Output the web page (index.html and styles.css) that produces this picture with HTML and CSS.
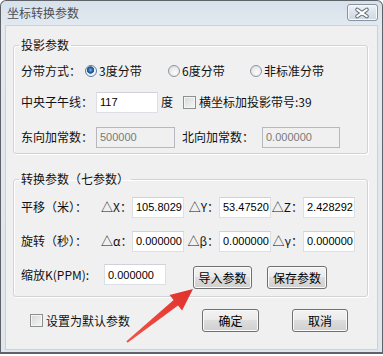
FILE: index.html
```html
<!DOCTYPE html>
<html lang="zh-CN">
<head>
    <meta charset="UTF-8">
    <title>坐标转换参数</title>
    <link rel="stylesheet" href="styles.css">
</head>
<body>
    <div class="window">
        <!-- Title bar -->
        <div class="titlebar">
            <span class="title">坐标转换参数</span>
            <button class="close">
                <svg width="31" height="17" viewBox="0 0 31 17">
                    <path d="M10.5 5.5 L20.5 12.5 M20.5 5.5 L10.5 12.5" stroke="#5d6670" stroke-width="4" stroke-linecap="round"/>
                    <path d="M10.5 5.5 L20.5 12.5 M20.5 5.5 L10.5 12.5" stroke="#fff" stroke-width="2" stroke-linecap="round"/>
                </svg>
            </button>
        </div>

        <div class="client">
            <!-- Projection group -->
            <fieldset class="group group-proj">
                <legend>投影参数</legend>
                <div class="row zone-row">
                    <span class="label zone-label">分带方式：</span>
                    <label class="opt opt-3"><span class="radio checked"></span>3度分带</label>
                    <label class="opt opt-6"><span class="radio"></span>6度分带</label>
                    <label class="opt"><span class="radio"></span>非标准分带</label>
                </div>
                <div class="row meridian-row">
                    <span class="label wide-label">中央子午线：</span>
                    <input class="field meridian" type="text" value="117">
                    <span class="unit">度</span>
                    <span class="check"></span>
                    <span>横坐标加投影带号:39</span>
                </div>
                <div class="row offset-row">
                    <span class="label wide-label">东向加常数：</span>
                    <input class="field easting" type="text" value="500000" disabled>
                    <span class="label north-label">北向加常数：</span>
                    <input class="field northing" type="text" value="0.000000" disabled>
                </div>
            </fieldset>

            <!-- Seven parameter group -->
            <fieldset class="group group-seven">
                <legend>转换参数（七参数）</legend>
                <div class="row shift-row">
                    <span class="label param-label">平移（米）：</span>
                    <span class="delta d1">△X：</span>
                    <input class="field param" type="text" value="105.8029">
                    <span class="delta d2">△Y：</span>
                    <input class="field param" type="text" value="53.47520">
                    <span class="delta d3">△Z：</span>
                    <input class="field param" type="text" value="2.428292">
                </div>
                <div class="row rotate-row">
                    <span class="label param-label">旋转（秒）：</span>
                    <span class="delta d1">△α：</span>
                    <input class="field param" type="text" value="0.000000">
                    <span class="delta d2">△β：</span>
                    <input class="field param" type="text" value="0.000000">
                    <span class="delta d3">△γ：</span>
                    <input class="field param" type="text" value="0.000000">
                </div>
                <div class="row scale-row">
                    <span class="label scale-label">缩放K(PPM):</span>
                    <input class="field scale" type="text" value="0.000000">
                    <button class="btn btn-import">导入参数</button>
                    <button class="btn btn-save">保存参数</button>
                </div>
            </fieldset>

            <!-- Footer row -->
            <div class="footer">
                <label class="default-opt"><span class="check"></span>设置为默认参数</label>
                <button class="btn btn-ok">确定</button>
                <button class="btn btn-cancel">取消</button>
            </div>
        </div>
    </div>

    <!-- Red pointer arrow drawn over the dialog -->
    <svg class="arrow" width="383" height="356" viewBox="0 0 383 356">
        <defs>
            <linearGradient id="arrowFill" x1="0" y1="1" x2="1" y2="0">
                <stop offset="0" stop-color="#f0554c"/>
                <stop offset="1" stop-color="#e0312b"/>
            </linearGradient>
        </defs>
        <polygon points="126.4,341.2 173.6,300.1 169.5,295 193,289 182.1,310.6 178,305.5 127.6,342.8" fill="url(#arrowFill)"/>
    </svg>
</body>
</html>
```

FILE: styles.css
```css
/* General */
html, body {
    margin: 0;
    padding: 0;
    background: #fff;
}
body {
    position: relative;
    width: 383px;
    height: 356px;
    overflow: hidden;
    font-family: "Noto Sans CJK SC", sans-serif;
    font-size: 12px;
    line-height: 14px;
    color: #111;
}

/* Window frame */
.window {
    width: 383px;
    height: 354px;
    box-sizing: border-box;
    border: 1px solid #5f6368;
    border-bottom-width: 2px;
    border-radius: 6px 6px 0 0;
    background: linear-gradient(#d7e1eb, #e2e9f0 24px, #dfe6ed);
    padding: 0 4px 2px;
    display: flex;
    flex-direction: column;
}
.titlebar {
    height: 24px;
    display: flex;
    align-items: center;
    justify-content: space-between;
    padding-left: 2px;
}
.title {
    color: #4a4f55;
}
.close {
    width: 31px;
    height: 17px;
    padding: 0;
    margin-top: -1px;
    border: 1px solid #8793a1;
    border-radius: 3px;
    background: linear-gradient(#f1f4f8, #dbe2ea 50%, #cfd8e2);
    box-shadow: inset 0 0 0 1px #f7f9fb;
    display: flex;
}
.close svg {
    margin: -1px 0 0 -1px;
}

.client {
    flex: 1;
    background: #f0f0f0;
    border: 1px solid #c9d1d9;
    padding: 0 7px;
}

/* Group boxes */
.group {
    width: 355px;
    box-sizing: border-box;
    margin: 0;
    padding: 0 0 5px 7px;
    border: 1px solid #d3d3d3;
    border-radius: 3px;
    box-shadow: inset 1px 1px 0 #fff, 1px 1px 0 #fff;
}
.group legend {
    padding: 0 2px;
    margin-left: -2px;
    line-height: 14px;
}
.group-proj {
    margin-top: 12px;
}
.group-seven {
    margin-top: 18px;
    padding-bottom: 8px;
}

.row {
    display: flex;
    align-items: center;
    height: 22px;
    white-space: nowrap;
}
.zone-row { margin-top: 8px; }
.meridian-row { margin-top: 9px; }
.offset-row { margin-top: 13px; }
.shift-row { margin-top: 10px; }
.rotate-row { margin-top: 12px; }
.scale-row {
    margin-top: 12px;
    height: 24px;
    align-items: flex-start;
}

.label { flex: none; }
.zone-label { width: 64px; }
.wide-label { width: 75px; }
.north-label { width: 80px; margin-left: 7px; }
.param-label { width: 80px; }
.scale-label { width: 83px; line-height: 21px; }

/* Radio buttons and check boxes */
.opt {
    display: flex;
    align-items: center;
}
.opt-3 { width: 83px; }
.opt-6 { width: 82px; }
.radio {
    width: 12px;
    height: 12px;
    box-sizing: border-box;
    margin-right: 2px;
    border: 1px solid #8f9499;
    border-radius: 50%;
    background: radial-gradient(circle at 60% 65%, #fdfdfd, #d6d8da);
}
.radio.checked {
    border-color: #5b7d9e;
    background: radial-gradient(circle at 45% 40%, #7fb1e4 0, #1f5a9a 2.5px, #2a5f93 3.4px, #e8eef4 4px, #fff);
}
.check {
    flex: none;
    width: 13px;
    height: 13px;
    box-sizing: border-box;
    margin: 0 3px 0 10px;
    border: 1px solid #8e8f8f;
    background: linear-gradient(135deg, #d4d6d8, #f7f7f7);
    box-shadow: inset 0 0 0 1px #f4f4f4;
}
.unit {
    margin-left: 3px;
}

/* Text fields */
.field {
    flex: none;
    height: 21px;
    box-sizing: border-box;
    margin: 0;
    padding: 0 0 0 3px;
    border: 1px solid #dcdfe4;
    border-top-color: #cfd3d9;
    background: #fff;
    font-family: "Liberation Sans", sans-serif;
    font-size: 11px;
    color: #000;
    outline: none;
}
.field:disabled {
    background: #f0f0f0;
    border-color: #b5b9bd;
    color: #7a7a7a;
}
.meridian { width: 62px; }
.easting { width: 79px; }
.northing { width: 78px; }
.param { width: 52px; }
.scale { width: 62px; }

.delta {
    flex: none;
    text-align: right;
}
.d1 { width: 31px; }
.d2 { width: 35px; }
.d3 { width: 32px; }

/* Buttons */
.btn {
    flex: none;
    height: 23px;
    padding: 0;
    border: 1px solid #707070;
    border-radius: 3px;
    background: linear-gradient(#f2f2f2, #ebebeb 45%, #dddddd 50%, #cfcfcf);
    box-shadow: inset 0 0 0 1px #fbfbfb;
    font-family: "Noto Sans CJK SC", sans-serif;
    font-size: 12px;
    color: #000;
}
.btn-import { width: 59px; margin: 2px 0 0 27px; }
.btn-save { width: 60px; margin: 2px 0 0 15px; }

.footer {
    display: flex;
    align-items: center;
    margin-top: 12px;
    padding-left: 17px;
}
.default-opt {
    width: 172px;
    display: flex;
    align-items: center;
}
.default-opt .check {
    margin-left: 0;
}
.btn-ok { width: 57px; }
.btn-cancel { width: 56px; margin-left: 33px; }

/* Overlay arrow */
.arrow {
    position: absolute;
    left: 0;
    top: 0;
    pointer-events: none;
}
```
